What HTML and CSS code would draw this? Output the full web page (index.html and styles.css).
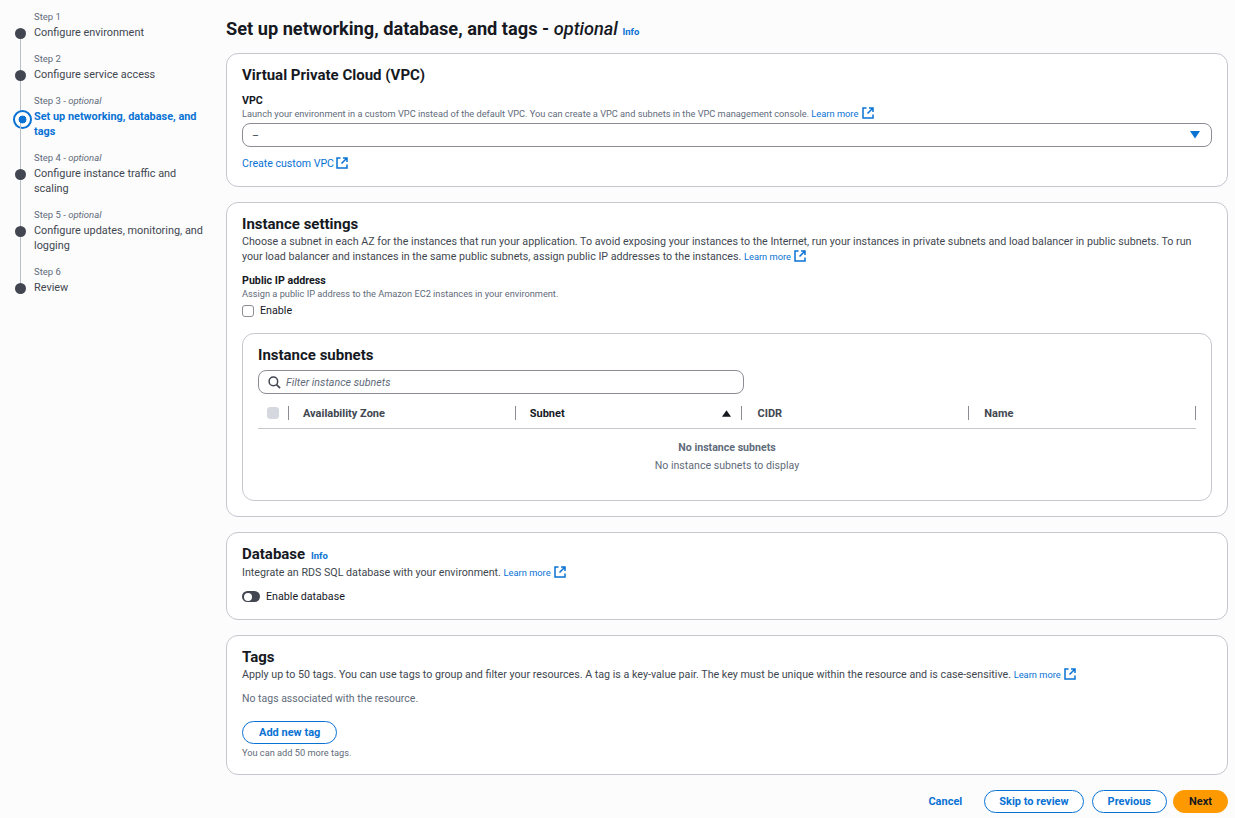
FILE: index.html
```html
<!DOCTYPE html>
<html lang="en">
<head>
    <meta charset="UTF-8">
    <meta name="viewport" content="width=device-width, initial-scale=1.0">
    <title>Set up networking, database, and tags</title>
    <link rel="stylesheet" href="styles.css">
</head>
<body>
    <svg width="0" height="0" class="sprite">
        <symbol id="ext" viewBox="0 0 12 12">
            <path d="M4.5 1H1v10h10V7.5M7 1h4v4M11 1L5.5 6.5" fill="none" stroke="currentColor" stroke-width="1.5"/>
        </symbol>
    </svg>
    <div class="layout">
        <nav class="steps">
            <div class="step">
                <div class="step-num">Step 1</div>
                <div class="step-name">Configure environment</div>
            </div>
            <div class="step">
                <div class="step-num">Step 2</div>
                <div class="step-name">Configure service access</div>
            </div>
            <div class="step active">
                <div class="step-num">Step 3 - <i>optional</i></div>
                <div class="step-name">Set up networking, database, and tags</div>
            </div>
            <div class="step">
                <div class="step-num">Step 4 - <i>optional</i></div>
                <div class="step-name">Configure instance traffic and scaling</div>
            </div>
            <div class="step">
                <div class="step-num">Step 5 - <i>optional</i></div>
                <div class="step-name">Configure updates, monitoring, and logging</div>
            </div>
            <div class="step last">
                <div class="step-num">Step 6</div>
                <div class="step-name">Review</div>
            </div>
        </nav>

        <main class="content">
            <h1 class="page-title">Set up networking, database, and tags - <i>optional</i> <a class="info" href="#">Info</a></h1>

            <section class="card card-vpc">
                <h2 class="card-title">Virtual Private Cloud (VPC)</h2>
                <div class="field-label vpc-label">VPC</div>
                <div class="hint">Launch your environment in a custom VPC instead of the default VPC. You can create a VPC and subnets in the VPC management console. <a class="more" href="#">Learn more <svg class="ext"><use href="#ext"/></svg></a></div>
                <div class="select">
                    <span>–</span>
                    <svg class="caret" viewBox="0 0 10 8" width="10" height="8"><path d="M0 0h10L5 7.5z" fill="#0972d3"/></svg>
                </div>
                <a class="create" href="#">Create custom VPC <svg class="ext"><use href="#ext"/></svg></a>
            </section>

            <section class="card card-instance">
                <h2 class="card-title">Instance settings</h2>
                <p class="desc">Choose a subnet in each AZ for the instances that run your application. To avoid exposing your instances to the Internet, run your instances in private subnets and load balancer in public subnets. To run your load balancer and instances in the same public subnets, assign public IP addresses to the instances. <a class="more" href="#">Learn more <svg class="ext"><use href="#ext"/></svg></a></p>
                <div class="field-label ip-label">Public IP address</div>
                <div class="hint ip-hint">Assign a public IP address to the Amazon EC2 instances in your environment.</div>
                <label class="check"><span class="box"></span>Enable</label>

                <div class="subnets">
                    <h2 class="card-title">Instance subnets</h2>
                    <div class="filter">
                        <svg viewBox="0 0 14 14" width="13" height="13"><circle cx="5.8" cy="5.8" r="4.6" fill="none" stroke="#424650" stroke-width="1.6"/><path d="M9.2 9.2L13 13" stroke="#424650" stroke-width="1.8"/></svg>
                        <span>Filter instance subnets</span>
                    </div>
                    <div class="table-head">
                        <div class="col col-check"><span class="box disabled"></span></div>
                        <div class="col col-az">Availability Zone</div>
                        <div class="col col-subnet">Subnet <svg viewBox="0 0 10 7" width="9" height="7"><path d="M5 0l5 7H0z" fill="#16191f"/></svg></div>
                        <div class="col col-cidr">CIDR</div>
                        <div class="col col-name">Name</div>
                    </div>
                    <div class="empty">
                        <b>No instance subnets</b>
                        <div>No instance subnets to display</div>
                    </div>
                </div>
            </section>

            <section class="card card-db">
                <h2 class="card-title">Database <a class="info" href="#">Info</a></h2>
                <p class="desc">Integrate an RDS SQL database with your environment. <a class="more" href="#">Learn more <svg class="ext"><use href="#ext"/></svg></a></p>
                <label class="toggle-row"><span class="toggle"></span>Enable database</label>
            </section>

            <section class="card card-tags">
                <h2 class="card-title">Tags</h2>
                <p class="desc">Apply up to 50 tags. You can use tags to group and filter your resources. A tag is a key-value pair. The key must be unique within the resource and is case-sensitive. <a class="more" href="#">Learn more <svg class="ext"><use href="#ext"/></svg></a></p>
                <p class="no-tags">No tags associated with the resource.</p>
                <button class="btn add-tag">Add new tag</button>
                <div class="hint tags-hint">You can add 50 more tags.</div>
            </section>

            <div class="actions">
                <a class="cancel" href="#">Cancel</a>
                <button class="btn skip">Skip to review</button>
                <button class="btn prev">Previous</button>
                <button class="btn next">Next</button>
            </div>
        </main>
    </div>
</body>
</html>
```

FILE: styles.css
```css
* {
    box-sizing: border-box;
}

body {
    font-family: Roboto, "Noto Sans", sans-serif;
    font-size: 10.7px;
    line-height: 15px;
    color: #16191f;
    background-color: #fcfcfd;
    margin: 0;
}

a {
    color: #0972d3;
    text-decoration: none;
}

h1, h2, p {
    margin: 0;
}

.sprite {
    position: absolute;
}

.layout {
    display: flex;
    padding-right: 7px;
}

/* left wizard steps */
.steps {
    width: 226px;
    flex: none;
    padding: 9px 20px 0 34px;
}

.step {
    position: relative;
    padding-bottom: 11px;
}

.step::before {
    content: "";
    position: absolute;
    left: -19px;
    top: 19px;
    width: 11px;
    height: 11px;
    border-radius: 50%;
    background: #424650;
}

.step::after {
    content: "";
    position: absolute;
    left: -14px;
    top: 30px;
    bottom: -19px;
    width: 1px;
    background: #b6bec9;
}

.step.last::after {
    display: none;
}

.step-num {
    font-size: 9.5px;
    line-height: 16px;
    color: #5f6b7a;
}

.step-name {
    font-size: 10.9px;
    color: #414750;
}

.active .step-name {
    color: #0972d3;
    font-weight: 700;
}

.active::before {
    left: -21px;
    top: 17px;
    width: 15px;
    height: 15px;
    background: radial-gradient(circle, #0972d3 3.7px, #fff 4.2px);
    border: 2px solid #0972d3;
}

.content {
    flex: 1;
    min-width: 0;
}

.page-title {
    font-size: 18.2px;
    line-height: 24px;
    font-weight: 700;
    color: #16191f;
    padding-top: 17px;
    height: 53px;
}

.page-title i {
    font-weight: 500;
}

.info {
    font-size: 9.5px;
    font-weight: 700;
}

.card {
    background: #fff;
    border: 1px solid #c6c6cd;
    border-radius: 12px;
    padding: 11px 15px 0;
    margin-bottom: 15px;
}

.card-vpc { height: 134px; }
.card-instance { height: 315px; }
.card-db { height: 88px; }
.card-tags { height: 140px; margin-bottom: 0; }

.card-title {
    font-size: 15px;
    line-height: 20px;
    font-weight: 700;
    color: #16191f;
}

.card-title .info {
    margin-left: 2px;
}

.card-db .card-title {
    margin-bottom: -1px;
}

.field-label {
    font-weight: 700;
}

.vpc-label {
    margin-top: 9px;
    line-height: 13px;
}

.hint {
    font-size: 9.22px;
    line-height: 13px;
    color: #5f6b7a;
}

.more {
    font-size: 9.3px;
    white-space: nowrap;
}

.ext {
    width: 12px;
    height: 12px;
    vertical-align: -2px;
    margin-left: 1px;
}

.select {
    display: flex;
    align-items: center;
    justify-content: space-between;
    height: 24px;
    margin-top: 3px;
    padding: 0 11px 0 9px;
    border: 1px solid #8c8c94;
    border-radius: 8px;
    color: #414750;
}

.create {
    display: block;
    margin-top: 9px;
    font-size: 10.6px;
}

.create .ext {
    margin-left: -1px;
}

.desc {
    color: #414750;
}

.ip-label {
    margin-top: 10px;
    line-height: 14px;
}

.ip-hint {
    margin-top: -1px;
}

.check {
    display: flex;
    align-items: center;
    gap: 6px;
    margin-top: 3px;
    color: #16191f;
}

.box {
    display: inline-block;
    width: 12px;
    height: 12px;
    background: #fff;
    border: 1px solid #8c8c94;
    border-radius: 3px;
}

.box.disabled {
    background: #d5d8de;
    border-color: #d5d8de;
}

.subnets {
    height: 168px;
    margin-top: 15px;
    padding: 11px 15px 0;
    border: 1px solid #c6c6cd;
    border-radius: 12px;
}

.filter {
    display: flex;
    align-items: center;
    gap: 5px;
    width: 486px;
    height: 24px;
    margin-top: 5px;
    padding-left: 9px;
    border: 1px solid #8c8c94;
    border-radius: 8px;
    font-style: italic;
    color: #5f6b7a;
}

.table-head {
    display: flex;
    align-items: center;
    height: 31px;
    margin-top: 4px;
    border-bottom: 1px solid #c6c6cd;
    font-size: 11px;
    font-weight: 700;
    color: #414750;
}

.col {
    display: flex;
    align-items: center;
    justify-content: space-between;
    height: 14px;
    padding: 0 15px 0 14px;
    border-right: 1px solid #8c8c94;
}

.col-check { width: 31px; padding-left: 9px; padding-right: 0; }
.col-az { width: 227px; }
.col-subnet { width: 227px; padding-right: 10px; color: #16191f; }
.col-cidr { width: 227px; padding-left: 15px; }
.col-name { width: 227px; padding-left: 15px; }

.empty {
    padding-top: 10px;
    text-align: center;
    font-size: 10.6px;
    line-height: 18px;
    color: #5f6b7a;
}

.toggle-row {
    display: flex;
    align-items: center;
    gap: 6px;
    margin-top: 9px;
}

.toggle {
    position: relative;
    width: 18px;
    height: 11px;
    border-radius: 6px;
    background: #424650;
}

.toggle::after {
    content: "";
    position: absolute;
    left: 1.5px;
    top: 1.5px;
    width: 8px;
    height: 8px;
    border-radius: 50%;
    background: #fff;
}

.no-tags {
    margin-top: 9px;
    font-size: 10.5px;
    color: #5f6b7a;
}

.btn {
    font-family: inherit;
    font-size: 11px;
    font-weight: 700;
    height: 23px;
    padding: 0 15px;
    color: #0972d3;
    background: #fff;
    border: 1px solid #0972d3;
    border-radius: 12px;
}

.add-tag {
    display: block;
    margin-top: 15px;
    padding: 0 16px;
}

.tags-hint {
    margin-top: 2px;
}

.actions {
    display: flex;
    justify-content: flex-end;
    align-items: center;
    gap: 6px;
    margin-top: 15px;
}

.cancel {
    font-size: 11px;
    font-weight: 700;
    margin-right: 16px;
}

.skip {
    padding: 0 14px;
    margin-right: 2px;
}

.next {
    color: #16191f;
    background: #ff9900;
    border-color: #ff9900;
}
```
